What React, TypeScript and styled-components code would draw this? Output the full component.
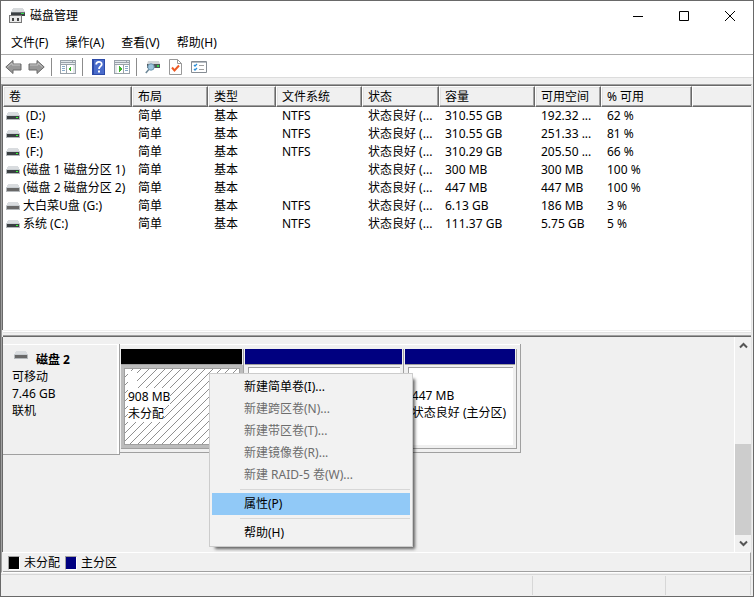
import React from "react";
import styled, { createGlobalStyle, css } from "styled-components";

const Global = createGlobalStyle`
  * { box-sizing: border-box; }
  html, body, #root { height: 100%; margin: 0; }
  body {
    font: 12px/18px "Noto Sans", "Noto Sans CJK SC", sans-serif;
    color: #000;
    background: #f0f0f0;
  }
  button { font: inherit; color: inherit; background: none; border: 0; padding: 0; margin: 0; }
  svg { flex: none; }
`;

const Window = styled.main`
  height: 100vh;
  display: flex;
  flex-direction: column;
  border: 1px solid #696969;
  background: #f0f0f0;
  overflow: hidden;
`;

const TitleBar = styled.header`
  display: flex;
  align-items: center;
  flex: none;
  height: 30px;
  padding-left: 8px;
  background: #fff;
`;

const Title = styled.h1`
  flex: 1;
  margin: 0 0 0 4px;
  font-size: 12px;
  font-weight: 400;
`;

const WindowButton = styled.button`
  width: 46px;
  height: 30px;
  display: grid;
  place-items: center;
`;

const MenuBar = styled.nav`
  display: flex;
  gap: 1px;
  flex: none;
  height: 24px;
  padding-left: 2px;
  background: #fff;
  border-bottom: 1px solid #aaa;
`;

const MenuItem = styled.button`
  padding: 0 8px;
`;

const Toolbar = styled.div`
  display: flex;
  align-items: center;
  flex: none;
  height: 23px;
  padding: 2px 0 0 1px;
  background: #fff;
  border-bottom: 1px solid #dcdcdc;
`;

const ToolButton = styled.button`
  width: 23px;
  height: 20px;
  display: grid;
  place-items: center;
`;

const ToolDivider = styled.span`
  width: 1px;
  height: 18px;
  margin: 0 4px 0 3px;
  background: #8c8c8c;
`;

const Client = styled.div`
  flex: 1;
  min-height: 0;
  display: flex;
  flex-direction: column;
  margin: 6px 1px 1px 0;
  border: 1px solid #a0a0a0;
  border-right-color: #e3e3e3;
  border-bottom-color: #fff;
`;

const VolumePane = styled.section`
  flex: none;
  height: 245px;
  background: #fff;
  border-top: 1px solid #696969;
  border-left: 1px solid #696969;
  overflow: hidden;
`;

const VolumeTable = styled.table`
  width: 100%;
  border-collapse: separate;
  border-spacing: 0;
  table-layout: fixed;
  white-space: nowrap;
`;

const ColumnHead = styled.th<{ $w?: number }>`
  ${(p) => p.$w && css`width: ${p.$w}px;`}
  height: 21px;
  padding: 0 0 0 5px;
  text-align: left;
  font-weight: 400;
  line-height: 17px;
  background: #f0f0f0;
  border: 1px solid #fff;
  border-right-color: #696969;
  border-bottom-color: #696969;
  box-shadow: inset -1px -1px #a0a0a0, inset 1px 1px #e3e3e3;
  &:last-child { border-right: 0; box-shadow: inset 0 -1px #a0a0a0; }
`;

const Cell = styled.td`
  height: 18px;
  padding: 0 0 0 6px;
`;

const VolumeName = styled.td`
  height: 18px;
  padding: 0 0 0 3px;
  & > span { display: flex; align-items: center; gap: 3px; white-space: pre; }
`;

const Splitter = styled.div`
  flex: none;
  height: 6px;
  margin: 1px 0 0 1px;
  border-top: 1px solid #fff;
  border-bottom: 1px solid #696969;
  box-shadow: inset 0 1px #e3e3e3, inset 0 -1px #a0a0a0;
`;

const GraphPane = styled.section`
  flex: 1;
  min-height: 0;
  display: flex;
  border-left: 1px solid #696969;
`;

const Disks = styled.div`
  position: relative;
  flex: 1;
  min-width: 0;
  padding-top: 7px;
`;

const DiskRow = styled.article`
  display: flex;
  height: 111px;
`;

const DiskLabel = styled.div`
  width: 117px;
  flex: none;
  padding: 7px 9px;
  line-height: 17px;
  border: 1px solid #a0a0a0;
  border-width: 0 1px 1px 0;
  box-shadow: inset 0 1px #fff, inset -2px 0 #fff;
`;

const DiskName = styled.h2`
  display: flex;
  gap: 8px;
  margin: 0;
  padding-left: 2px;
  font-size: 12px;
  line-height: 17px;
`;

const Partitions = styled.div`
  display: flex;
  width: 401px;
  height: 109px;
  padding: 5px 3px 3px 1px;
  border: 1px solid #a0a0a0;
  border-width: 0 1px 1px 0;
  box-shadow: inset 0 1px #fff;
`;

const Partition = styled.div<{ $grow: number }>`
  flex: ${(p) => p.$grow} 1 0;
  min-width: 0;
  display: flex;
  flex-direction: column;
  border-right: 1px solid #a0a0a0;
  border-bottom: 1px solid #a0a0a0;
  & + & { margin-left: 1px; }
`;

const Stripe = styled.div<{ $color: string }>`
  height: 16px;
  flex: none;
  margin-right: 1px;
  background: ${(p) => p.$color};
  border-bottom: 1px solid #a0a0a0;
`;

const PartitionBody = styled.div<{ $selected?: boolean }>`
  flex: 1;
  display: flex;
  flex-direction: column;
  align-items: flex-start;
  padding: 2px 0 0 3px;
  background: #fff;
  border: 1px solid #a0a0a0;
  line-height: 17px;
  white-space: nowrap;
  ${(p) =>
    p.$selected
      ? css`
          background: linear-gradient(135deg, #fff 46%, #909090 46% 54%, #fff 54%) 0 0 / 8px 8px;
          outline: 3px solid #bcbcbc;
          margin: 3px;
        `
      : css`
          margin: 2px 3px 3px;
          border-width: 1px 0 0 1px;
        `}
`;

const PartitionText = styled.span`
  min-width: 9px;
  min-height: 17px;
  background: #fff;
`;

const ScrollTrack = styled.div`
  width: 17px;
  flex: none;
  display: flex;
  flex-direction: column;
  border-left: 1px solid #fff;
`;

const ScrollArrow = styled.button`
  height: 17px;
  display: grid;
  place-items: center;
`;

const ScrollThumb = styled.div`
  height: 91px;
  margin-top: auto;
  background: #cdcdcd;
`;

const Legend = styled.footer`
  flex: none;
  display: flex;
  align-items: center;
  height: 20px;
  margin-left: 1px;
  padding: 1px 0 0 5px;
  border: 1px solid #a0a0a0;
  border-width: 1px 1px 1px 0;
  border-top-color: #fff;
`;

const Swatch = styled.i<{ $color: string }>`
  width: 12px;
  height: 14px;
  margin-right: 4px;
  background: ${(p) => p.$color};
  border: 1px solid #a0a0a0;
  border-right-color: #fff;
  border-bottom-color: #fff;
`;

const LegendText = styled.span`
  margin-right: 5px;
`;

const StatusBar = styled.div`
  flex: none;
  display: grid;
  grid-template-columns: 1fr 133px 85px;
  height: 22px;
  padding: 1px 2px 1px 0;
  border-top: 1px solid #d7d7d7;
`;

const StatusPart = styled.span`
  border-right: 1px solid #d7d7d7;
`;

const ContextMenu = styled.div`
  position: absolute;
  left: 206px;
  top: 36px;
  width: 204px;
  padding: 2px;
  background: #f2f2f2;
  border: 1px solid #ccc;
  box-shadow: 4px 4px 3px -2px rgba(0, 0, 0, 0.6);
`;

const MenuEntry = styled.button<{ $active?: boolean }>`
  display: block;
  width: 100%;
  height: 22px;
  padding-left: 32px;
  text-align: left;
  background: ${(p) => (p.$active ? "#91c9f7" : "none")};
  &:disabled { color: #6d6d6d; }
`;

const MenuRule = styled.hr`
  height: 1px;
  margin: 3px 0 3px 28px;
  border: 0;
  background: #d7d7d7;
`;

function DriveIcon({ removable }: { removable?: boolean }) {
  return (
    <svg width="14" height="9" viewBox="0 0 14 9" shapeRendering="crispEdges" aria-hidden="true">
      <path d="M2 0h10v1h1v3H1V1h1z" fill="#d9dcdf" />
      <path d="M0 3h14v1H0z" fill="#c9ced2" />
      <path d="M0 4h14v4H0z" fill="#b4b8bb" />
      <path d="M1 4h12v3H1z" fill={removable ? "#686868" : "#3a3f42"} />
      {!removable && <path d="M10 5h2v1h-2z" fill="#3f3" />}
    </svg>
  );
}

const AppIcon = () => (
  <svg width="17" height="16" viewBox="0 0 17 16" shapeRendering="crispEdges" aria-hidden="true">
    <path d="M4 0h10l2 4H2z" fill="#d8dbdd" />
    <path d="M2 4h14v4H2z" fill="#3b4043" />
    <path d="M2 4h14v1H2z" fill="#6c7174" />
    <path d="M12 5h3v1h-3z" fill="#2fe04a" />
    <path d="M0 7h13v8H0z" fill="#777" />
    <path d="M1 8h11v6H1z" fill="#e9e9e9" />
    <path d="M3 10h2v3H3zM8 10h2v3H8z" fill="#444" />
  </svg>
);

const ArrowIcon = ({ right }: { right?: boolean }) => (
  <svg width="17" height="16" viewBox="0 0 17 16" aria-hidden="true">
    <g transform={right ? "matrix(-1 0 0 1 17 0)" : undefined}>
      <path d="M.8 8 8 1.500V5h8v6H8v3.500z" fill="#989898" stroke="#6a6a6a" />
      <path d="M2.500 8 7 4v2h8" fill="none" stroke="#c4c4c4" />
    </g>
  </svg>
);

const PaneIcon = ({ right }: { right?: boolean }) => (
  <svg width="16" height="14" viewBox="0 0 16 14" shapeRendering="crispEdges" aria-hidden="true">
    <path d="M0 0h16v14H0z" fill="#9aa2aa" />
    <path d="M1 1h11v1H1zM13 1h2v1h-2z" fill="#dfe5ea" />
    <path d="M1 3h14v1H1z" fill="#e8ecf0" />
    <path d="M1 5h14v8H1z" fill="#fff" />
    <g transform={right ? "matrix(-1 0 0 1 16 0)" : undefined}>
      <path d="M6 4h1v9H6z" fill="#9aa2aa" />
      <path d="M13 5h2v8h-2z" fill="#e4e7ea" />
      <path d="M2 6h3v1H2zM2 8h3v1H2zM2 10h3v1H2z" fill="#86a9c8" />
      <path d="M11 6v6L8 9z" fill="#3cb32c" />
    </g>
  </svg>
);

const HelpIcon = () => (
  <svg width="13" height="16" viewBox="0 0 13 16" aria-hidden="true">
    <path d="M0 0h13v16H0z" fill="#2c4aa8" />
    <path d="M2 1h10v14H2z" fill="#4a6ccb" />
    <path d="M4.200 5.500C4.200 2 9.700 2 9.700 5.200 9.700 7.500 7 7.400 7 10" fill="none" stroke="#fff" strokeWidth="1.800" />
    <path d="M6 11.500h2v2H6z" fill="#fff" />
  </svg>
);

const SearchDriveIcon = () => (
  <svg width="16" height="14" viewBox="0 0 16 14" aria-hidden="true">
    <path d="M3 1h11l1 3H2z" fill="#d2d5d8" />
    <path d="M2 4h13v4H2z" fill="#50565a" />
    <path d="M12 5h2v2h-2z" fill="#34d34a" />
    <circle cx="6" cy="7" r="3.200" fill="#9dc4dd" stroke="#6f98b2" />
    <path d="M3.800 9.400.8 13" stroke="#6d8797" strokeWidth="1.500" />
  </svg>
);

const CheckPageIcon = () => (
  <svg width="13" height="16" viewBox="0 0 13 16" aria-hidden="true">
    <path d="M.5.5h8l4 4v11H.5z" fill="#fff" stroke="#999" />
    <path d="M8.500.5v4h4" fill="none" stroke="#999" />
    <path d="m3 8.500 2.500 3L10 6.500" fill="none" stroke="#ee5a24" strokeWidth="2" />
  </svg>
);

const ListIcon = () => (
  <svg width="16" height="12" viewBox="0 0 16 12" aria-hidden="true">
    <path d="M.5.5h15v11H.5z" fill="#fff" stroke="#868d94" />
    <path d="M1 1.500h14" stroke="#b8bec4" />
    <path d="m3 4 1 1 2-2M3 8l1 1 2-2" fill="none" stroke="#2b8fd8" strokeWidth="1.300" />
    <path d="M8 4.500h5M8 8.500h5" stroke="#a0a0a0" />
  </svg>
);

const Chevron = ({ down }: { down?: boolean }) => (
  <svg width="9" height="7" viewBox="0 0 9 7" aria-hidden="true">
    <path d={down ? "M1 1.500 4.500 5 8 1.500" : "M1 5.500 4.500 2 8 5.500"} fill="none" stroke="#555" strokeWidth="2" />
  </svg>
);

const columns = [
  ["卷", 129], ["布局", 76], ["类型", 68], ["文件系统", 86], ["状态", 77],
  ["容量", 96], ["可用空间", 66], ["% 可用", 91],
] as const;

const volumes = [
  [" (D:)", false, "NTFS", "310.55 GB", "192.32 ...", "62 %"],
  [" (E:)", false, "NTFS", "310.55 GB", "251.33 ...", "81 %"],
  [" (F:)", false, "NTFS", "310.29 GB", "205.50 ...", "66 %"],
  ["(磁盘 1 磁盘分区 1)", false, "", "300 MB", "300 MB", "100 %"],
  ["(磁盘 2 磁盘分区 2)", true, "", "447 MB", "447 MB", "100 %"],
  ["大白菜U盘 (G:)", true, "NTFS", "6.13 GB", "186 MB", "3 %"],
  ["系统 (C:)", false, "NTFS", "111.37 GB", "5.75 GB", "5 %"],
] as const;

export default function App() {
  return (
    <>
      <Global />
      <Window>
        <TitleBar>
          <AppIcon />
          <Title>磁盘管理</Title>
          <WindowButton aria-label="最小化">
            <svg width="10" height="10"><path d="M0 5.500h10" stroke="#000" /></svg>
          </WindowButton>
          <WindowButton aria-label="最大化">
            <svg width="10" height="10"><path d="M.5.5h9v9h-9z" fill="none" stroke="#000" /></svg>
          </WindowButton>
          <WindowButton aria-label="关闭">
            <svg width="10" height="10"><path d="m0 0 10 10M10 0 0 10" stroke="#000" /></svg>
          </WindowButton>
        </TitleBar>
        <MenuBar>
          {["文件(F)", "操作(A)", "查看(V)", "帮助(H)"].map((m) => <MenuItem key={m}>{m}</MenuItem>)}
        </MenuBar>
        <Toolbar>
          <ToolButton aria-label="后退"><ArrowIcon /></ToolButton>
          <ToolButton aria-label="前进"><ArrowIcon right /></ToolButton>
          <ToolDivider />
          <ToolButton aria-label="显示控制台树"><PaneIcon /></ToolButton>
          <ToolDivider />
          <ToolButton aria-label="帮助"><HelpIcon /></ToolButton>
          <ToolButton aria-label="显示操作窗格"><PaneIcon right /></ToolButton>
          <ToolDivider />
          <ToolButton aria-label="重新扫描磁盘"><SearchDriveIcon /></ToolButton>
          <ToolButton aria-label="属性"><CheckPageIcon /></ToolButton>
          <ToolButton aria-label="设置"><ListIcon /></ToolButton>
        </Toolbar>
        <Client>
          <VolumePane>
            <VolumeTable>
              <thead>
                <tr>
                  {columns.map(([name, w]) => <ColumnHead key={name} $w={w}>{name}</ColumnHead>)}
                  <ColumnHead />
                </tr>
              </thead>
              <tbody>
                {volumes.map(([name, removable, fs, size, free, pct]) => (
                  <tr key={name}>
                    <VolumeName><span><DriveIcon removable={removable} />{name}</span></VolumeName>
                    <Cell>简单</Cell>
                    <Cell>基本</Cell>
                    <Cell>{fs}</Cell>
                    <Cell>状态良好 (...</Cell>
                    <Cell>{size}</Cell>
                    <Cell>{free}</Cell>
                    <Cell>{pct}</Cell>
                  </tr>
                ))}
              </tbody>
            </VolumeTable>
          </VolumePane>
          <Splitter />
          <GraphPane>
            <Disks>
              <DiskRow>
                <DiskLabel>
                  <DiskName><DriveIcon removable />磁盘 2</DiskName>
                  <div>可移动</div>
                  <div>7.46 GB</div>
                  <div>联机</div>
                </DiskLabel>
                <Partitions>
                  <Partition $grow={123}>
                    <Stripe $color="#000" />
                    <PartitionBody $selected>
                      <PartitionText />
                      <PartitionText>908 MB</PartitionText>
                      <PartitionText>未分配</PartitionText>
                    </PartitionBody>
                  </Partition>
                  <Partition $grow={159}>
                    <Stripe $color="#000080" />
                    <PartitionBody />
                  </Partition>
                  <Partition $grow={112}>
                    <Stripe $color="#000080" />
                    <PartitionBody>
                      <PartitionText />
                      <PartitionText>447 MB</PartitionText>
                      <PartitionText>状态良好 (主分区)</PartitionText>
                    </PartitionBody>
                  </Partition>
                </Partitions>
              </DiskRow>
              <ContextMenu role="menu">
                <MenuEntry role="menuitem">新建简单卷(I)...</MenuEntry>
                <MenuEntry role="menuitem" disabled>新建跨区卷(N)...</MenuEntry>
                <MenuEntry role="menuitem" disabled>新建带区卷(T)...</MenuEntry>
                <MenuEntry role="menuitem" disabled>新建镜像卷(R)...</MenuEntry>
                <MenuEntry role="menuitem" disabled>新建 RAID-5 卷(W)...</MenuEntry>
                <MenuRule />
                <MenuEntry role="menuitem" $active>属性(P)</MenuEntry>
                <MenuRule />
                <MenuEntry role="menuitem">帮助(H)</MenuEntry>
              </ContextMenu>
            </Disks>
            <ScrollTrack>
              <ScrollArrow aria-label="向上滚动"><Chevron /></ScrollArrow>
              <ScrollThumb />
              <ScrollArrow aria-label="向下滚动"><Chevron down /></ScrollArrow>
            </ScrollTrack>
          </GraphPane>
          <Legend>
            <Swatch $color="#000" /><LegendText>未分配</LegendText>
            <Swatch $color="#000080" /><LegendText>主分区</LegendText>
          </Legend>
        </Client>
        <StatusBar><StatusPart /><StatusPart /><StatusPart /></StatusBar>
      </Window>
    </>
  );
}
